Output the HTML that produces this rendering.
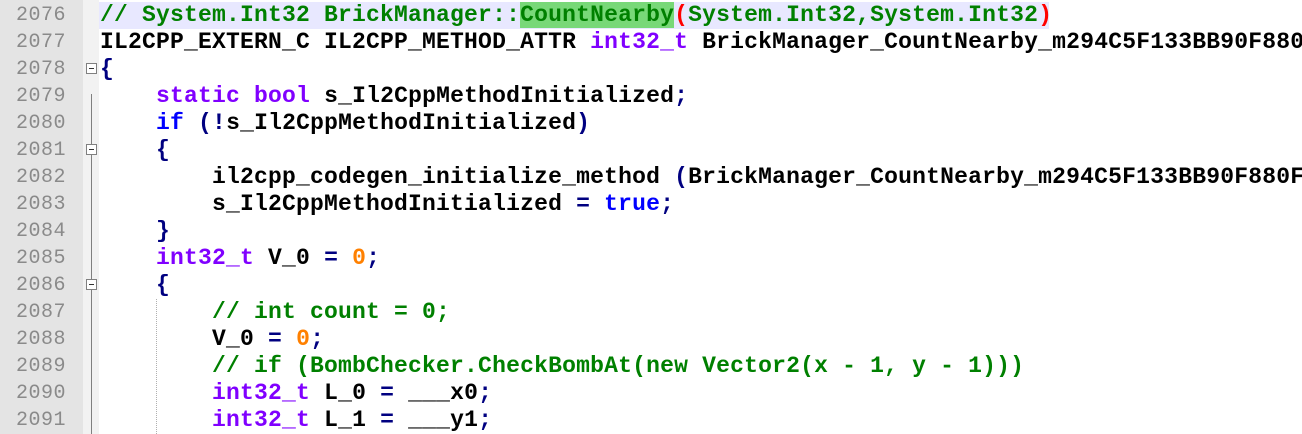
<!DOCTYPE html><html><head><style>
body{margin:0;width:1302px;height:434px;overflow:hidden;background:#fff;position:relative}
.num{position:absolute;left:0;top:0;width:83px;height:434px;background:#e4e4e4}
.fold{position:absolute;left:83px;top:0;width:16px;height:434px;background:#f2f2f2}
.ln{position:absolute;left:0;width:66px;text-align:right;font:20px "Liberation Mono",monospace;color:#8a8a8a;line-height:27px;letter-spacing:0.5px}
.c{position:absolute;left:100px;font:bold 23px "Liberation Mono",monospace;line-height:27px;white-space:pre;color:#000;letter-spacing:0.2px}
.g{color:#008000}.k{color:#8000ff}.b{color:#0000ff}.o{color:#ff8000}.n{color:#000080}.r{color:#ff0000}
.hl{background:#78d878}
.box{position:absolute;left:86px;width:11px;height:11px;border:1px solid #808080;background:#fff;box-sizing:border-box}
.box:after{content:"";position:absolute;left:2px;top:4px;width:5px;height:1px;background:#333}
.vl{position:absolute;left:91px;width:1px;background:#808080}
.ig{position:absolute;width:0;border-left:1px dotted #b0b0b0}
</style></head><body>
<div class="num"></div><div class="fold"></div>
<div style="position:absolute;left:99px;top:2px;width:950px;height:27px;background:#e8e8ff"></div>
<div class="vl" style="top:94px;height:340px"></div>
<div class="box" style="top:63px"></div>
<div class="box" style="top:144px"></div>
<div class="box" style="top:279px"></div>
<div class="ig" style="left:156px;top:299px;height:135px"></div>
<div class="ln" style="top:2px">2076</div><div class="ln" style="top:29px">2077</div><div class="ln" style="top:56px">2078</div><div class="ln" style="top:83px">2079</div><div class="ln" style="top:110px">2080</div><div class="ln" style="top:137px">2081</div><div class="ln" style="top:164px">2082</div><div class="ln" style="top:191px">2083</div><div class="ln" style="top:218px">2084</div><div class="ln" style="top:245px">2085</div><div class="ln" style="top:272px">2086</div><div class="ln" style="top:299px">2087</div><div class="ln" style="top:326px">2088</div><div class="ln" style="top:353px">2089</div><div class="ln" style="top:380px">2090</div><div class="ln" style="top:407px">2091</div>
<div class="c g" style="top:2px">// System.Int32 BrickManager::<span class="hl">CountNearby</span><span class="r">(</span>System.Int32,System.Int32<span class="r">)</span></div>
<div class="c" style="top:29px">IL2CPP_EXTERN_C IL2CPP_METHOD_ATTR <span class="k">int32_t</span> BrickManager_CountNearby_m294C5F133BB90F880</div>
<div class="c n" style="top:56px">{</div>
<div class="c" style="top:83px">    <span class="k">static</span> <span class="k">bool</span> s_Il2CppMethodInitialized<span class="n">;</span></div>
<div class="c" style="top:110px">    <span class="b">if</span> <span class="n">(!</span>s_Il2CppMethodInitialized<span class="n">)</span></div>
<div class="c n" style="top:137px">    {</div>
<div class="c" style="top:164px">        il2cpp_codegen_initialize_method <span class="n">(</span>BrickManager_CountNearby_m294C5F133BB90F880F</div>
<div class="c" style="top:191px">        s_Il2CppMethodInitialized <span class="n">=</span> <span class="b">true</span><span class="n">;</span></div>
<div class="c n" style="top:218px">    }</div>
<div class="c" style="top:245px">    <span class="k">int32_t</span> V_0 <span class="n">=</span> <span class="o">0</span><span class="n">;</span></div>
<div class="c n" style="top:272px">    {</div>
<div class="c g" style="top:299px">        // int count = 0;</div>
<div class="c" style="top:326px">        V_0 <span class="n">=</span> <span class="o">0</span><span class="n">;</span></div>
<div class="c g" style="top:353px">        // if (BombChecker.CheckBombAt(new Vector2(x - 1, y - 1)))</div>
<div class="c" style="top:380px">        <span class="k">int32_t</span> L_0 <span class="n">=</span> ___x0<span class="n">;</span></div>
<div class="c" style="top:407px">        <span class="k">int32_t</span> L_1 <span class="n">=</span> ___y1<span class="n">;</span></div>
</body></html>
